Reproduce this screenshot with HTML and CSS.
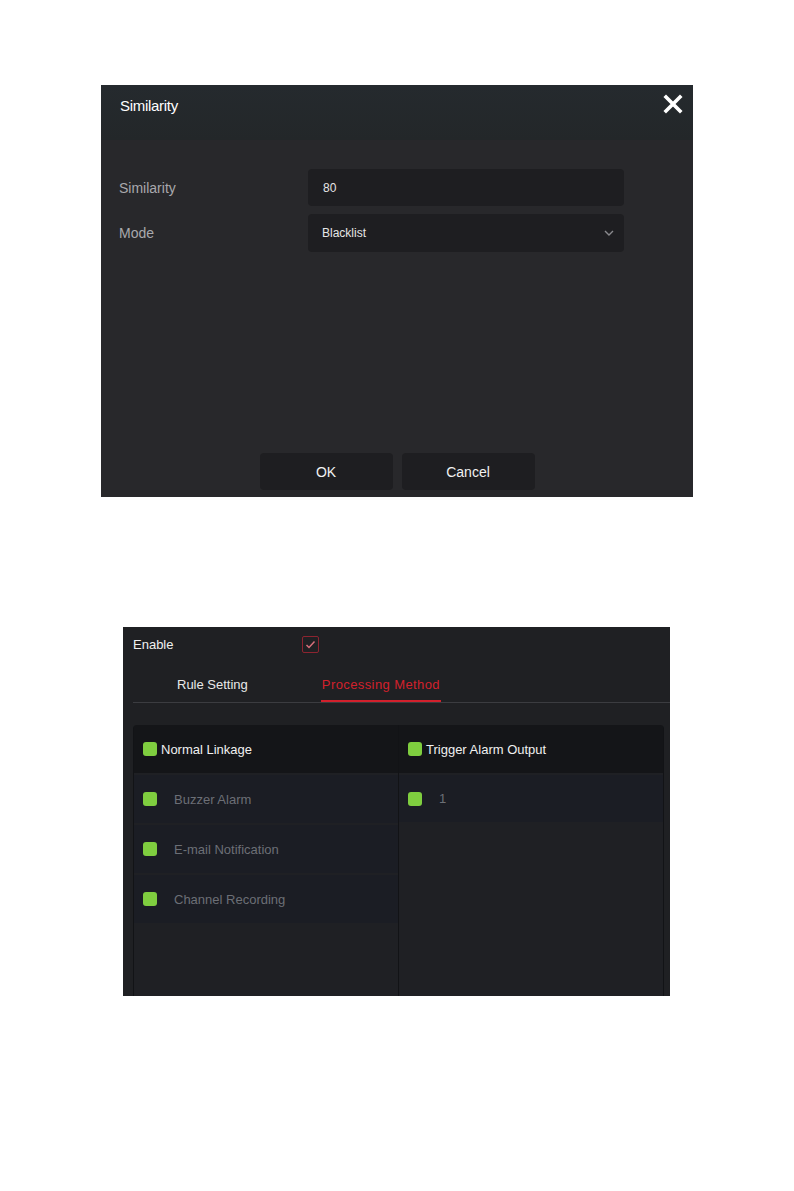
FILE: index.html
```html
<!DOCTYPE html>
<html lang="en">
<head>
    <meta charset="UTF-8">
    <title>Similarity / Processing Method</title>
    <link rel="stylesheet" href="styles.css">
</head>
<body>
    <div class="page">
        <div class="dialog">
            <div class="dialog-head">
                <span class="dialog-title">Similarity</span>
                <svg class="close" width="20" height="20" viewBox="0 0 20 20">
                    <path d="M3 3 L17 17 M17 3 L3 17" stroke="#fff" stroke-width="3.6" stroke-linecap="square"/>
                </svg>
            </div>
            <div class="dialog-body">
                <div class="field">
                    <span class="field-label">Similarity</span>
                    <div class="input">80</div>
                </div>
                <div class="field">
                    <span class="field-label">Mode</span>
                    <div class="input select">
                        Blacklist
                        <svg width="10" height="6" viewBox="0 0 10 6">
                            <path d="M1 1 L5 5 L9 1" stroke="#8a8a8e" stroke-width="1.4" fill="none"/>
                        </svg>
                    </div>
                </div>
                <div class="dialog-foot">
                    <button class="btn">OK</button>
                    <button class="btn">Cancel</button>
                </div>
            </div>
        </div>

        <div class="alarm">
            <div class="enable-row">
                <span class="enable-label">Enable</span>
                <span class="red-check">
                    <svg width="11" height="9" viewBox="0 0 11 9">
                        <path d="M1.5 5 L4 7.5 L9.5 1.5" stroke="#d8707c" stroke-width="1.5" fill="none"/>
                    </svg>
                </span>
            </div>
            <div class="tabs">
                <span class="tab">Rule Setting</span>
                <span class="tab active">Processing Method</span>
            </div>
            <div class="panel">
                <div class="col">
                    <div class="col-head"><span class="box"></span>Normal Linkage</div>
                    <div class="item"><span class="box"></span>Buzzer Alarm</div>
                    <div class="item"><span class="box"></span>E-mail Notification</div>
                    <div class="item"><span class="box"></span>Channel Recording</div>
                </div>
                <div class="col">
                    <div class="col-head"><span class="box"></span>Trigger Alarm Output</div>
                    <div class="item short"><span class="box"></span>1</div>
                </div>
            </div>
        </div>
    </div>
</body>
</html>
```

FILE: styles.css
```css
body {
    margin: 0;
    background: #fff;
    font-family: "Liberation Sans", Arial, sans-serif;
}
.page {
    padding-top: 85px;
    padding-bottom: 195px;
}

/* similarity dialog */
.dialog {
    margin-left: 101px;
    width: 592px;
    height: 412px;
    display: flex;
    flex-direction: column;
    background: #28282b;
}
.dialog-head {
    height: 55px;
    display: flex;
    justify-content: space-between;
    align-items: flex-start;
    padding: 0 10px 0 19px;
    background: linear-gradient(#252a2e, #232729);
}
.dialog-title {
    margin-top: 11px;
    font-size: 15px;
    line-height: 20px;
    color: #fff;
    letter-spacing: -0.3px;
}
.close {
    margin-top: 9px;
}
.dialog-body {
    flex: 1;
    display: flex;
    flex-direction: column;
    gap: 8px;
    padding: 29px 0 7px 18px;
}
.field {
    display: flex;
    align-items: center;
}
.field-label {
    width: 189px;
    font-size: 14px;
    color: #a9a9ad;
}
.input {
    width: 301px;
    height: 37px;
    padding-left: 15px;
    display: flex;
    align-items: center;
    justify-content: space-between;
    background: #1e1e21;
    border-radius: 4px;
    font-size: 12px;
    color: #e6e6e6;
}
.input.select {
    padding-left: 14px;
    padding-right: 10px;
    width: 292px;
    height: 38px;
}
.dialog-foot {
    margin-top: auto;
    margin-right: 18px;
    display: flex;
    justify-content: center;
    gap: 9px;
}
.btn {
    width: 133px;
    height: 37px;
    border: none;
    border-radius: 4px;
    background: #1e1e21;
    color: #f2f2f2;
    font-family: inherit;
    font-size: 14px;
}

/* processing method */
.alarm {
    margin-top: 130px;
    margin-left: 123px;
    width: 547px;
    height: 369px;
    background: #1f2023;
    display: flex;
    flex-direction: column;
    overflow: hidden;
}
.enable-row {
    height: 35px;
    display: flex;
    align-items: center;
    padding-left: 10px;
}
.enable-label {
    width: 169px;
    font-size: 13px;
    color: #f0f0f0;
}
.red-check {
    width: 15px;
    height: 15px;
    border: 1px solid #8c2430;
    border-radius: 2px;
    display: flex;
    align-items: center;
    justify-content: center;
}
.tabs {
    margin-left: 10px;
    height: 40px;
    display: flex;
    align-items: flex-end;
    border-bottom: 1px solid #3b3c40;
}
.tab {
    padding-bottom: 7px;
    font-size: 13px;
    line-height: 16px;
    color: #e8e8e8;
    border-bottom: 2px solid transparent;
}
.tab:first-child {
    margin-left: 44px;
    margin-right: 73px;
}
.tab.active {
    color: #d2202c;
    border-bottom-color: #d2202c;
    padding-left: 1px;
    padding-right: 1px;
    letter-spacing: 0.4px;
}
.panel {
    margin: 22px 6px 0 10px;
    flex: 1;
    display: grid;
    grid-template-columns: 265px 266px;
    border-radius: 4px 4px 0 0;
    overflow: hidden;
}
.col {
    display: flex;
    flex-direction: column;
    gap: 2px;
    border-left: 1px solid #121316;
    background: #1f2024;
}
.col:last-child {
    border-right: 1px solid #121316;
}
.col-head {
    height: 48px;
    display: flex;
    align-items: center;
    padding-left: 9px;
    background: #141518;
    font-size: 13px;
    color: #f0f0f0;
}
.col-head .box {
    margin-right: 4px;
}
.item {
    height: 48px;
    display: flex;
    align-items: center;
    padding-left: 9px;
    background: #1b1d24;
    font-size: 13px;
    color: #6c6f76;
}
.item.short {
    height: 47px;
}
.item .box {
    margin-right: 17px;
}
.box {
    width: 14px;
    height: 14px;
    border-radius: 3px;
    background: #7fce3f;
}
```
